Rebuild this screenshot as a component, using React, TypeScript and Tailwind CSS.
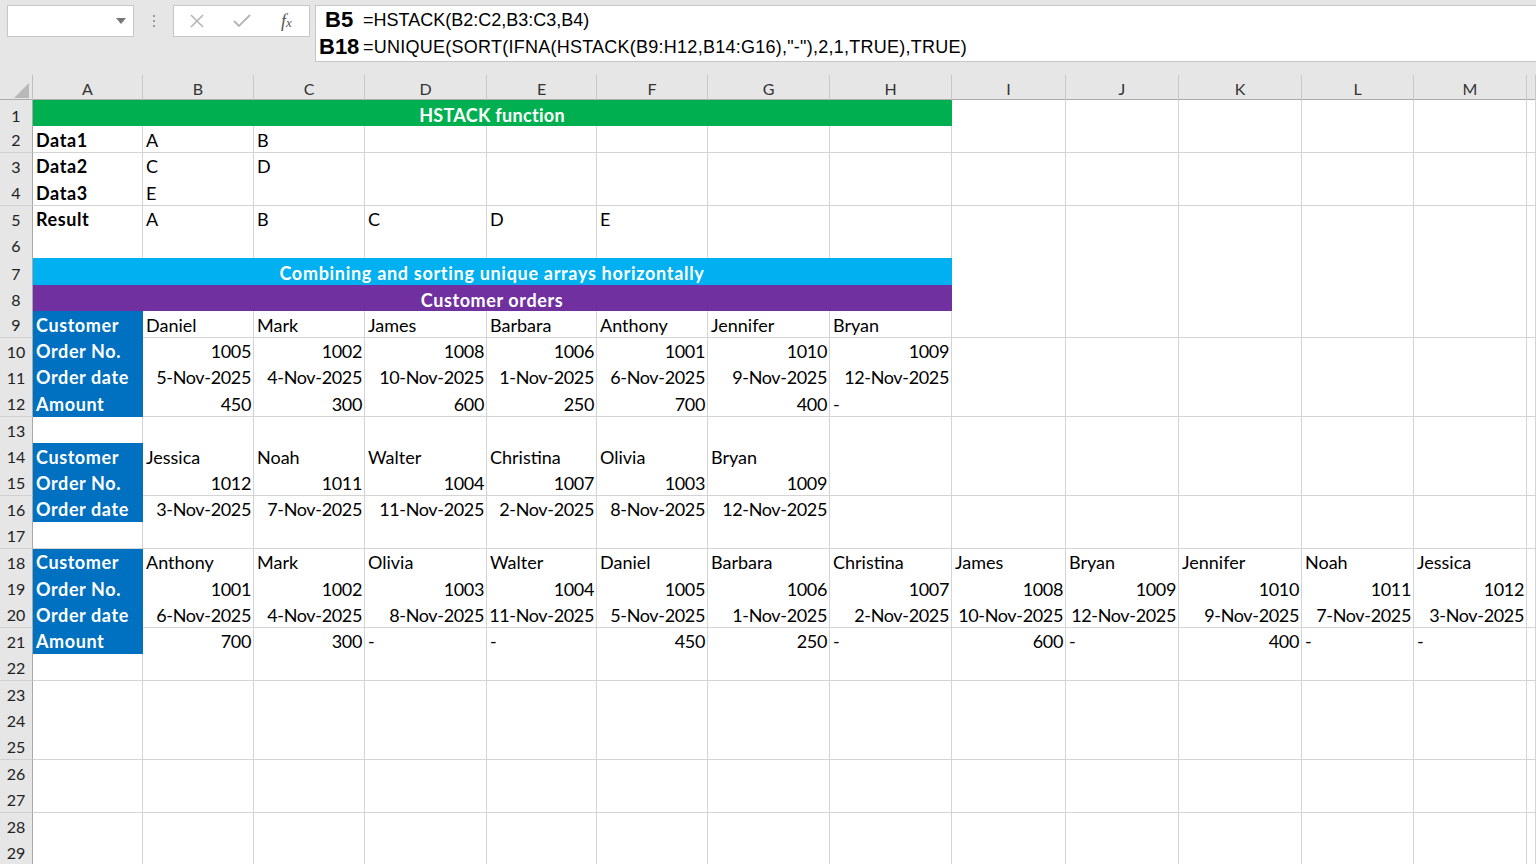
import clsx from 'clsx'

const COLS = ['A', 'B', 'C', 'D', 'E', 'F', 'G', 'H', 'I', 'J', 'K', 'L', 'M', '']
const GRID =
  'grid grid-cols-[33px_110px_111px_111px_122px_110px_111px_122px_122px_114px_113px_123px_112px_113px_1fr]'

const banners: Record<number, { cls: string; text: string }> = {
  1: { cls: 'bg-[#00b050] border-[#00b050] tracking-[0.3px]', text: 'HSTACK function' },
  7: { cls: 'bg-[#00b0f0] border-[#00b0f0] tracking-[0.7px]', text: 'Combining and sorting unique arrays horizontally' },
  8: { cls: 'bg-[#7030a0] border-[#7030a0] tracking-[0.6px]', text: 'Customer orders' },
}

const data: Record<number, string[]> = {
  2: ['Data1', 'A', 'B'],
  3: ['Data2', 'C', 'D'],
  4: ['Data3', 'E'],
  5: ['Result', 'A', 'B', 'C', 'D', 'E'],
  9: ['Customer', 'Daniel', 'Mark', 'James', 'Barbara', 'Anthony', 'Jennifer', 'Bryan'],
  10: ['Order No.', '1005', '1002', '1008', '1006', '1001', '1010', '1009'],
  11: ['Order date', '5-Nov-2025', '4-Nov-2025', '10-Nov-2025', '1-Nov-2025', '6-Nov-2025', '9-Nov-2025', '12-Nov-2025'],
  12: ['Amount', '450', '300', '600', '250', '700', '400', '-'],
  14: ['Customer', 'Jessica', 'Noah', 'Walter', 'Christina', 'Olivia', 'Bryan'],
  15: ['Order No.', '1012', '1011', '1004', '1007', '1003', '1009'],
  16: ['Order date', '3-Nov-2025', '7-Nov-2025', '11-Nov-2025', '2-Nov-2025', '8-Nov-2025', '12-Nov-2025'],
  18: ['Customer', 'Anthony', 'Mark', 'Olivia', 'Walter', 'Daniel', 'Barbara', 'Christina', 'James', 'Bryan', 'Jennifer', 'Noah', 'Jessica'],
  19: ['Order No.', '1001', '1002', '1003', '1004', '1005', '1006', '1007', '1008', '1009', '1010', '1011', '1012'],
  20: ['Order date', '6-Nov-2025', '4-Nov-2025', '8-Nov-2025', '11-Nov-2025', '5-Nov-2025', '1-Nov-2025', '2-Nov-2025', '10-Nov-2025', '12-Nov-2025', '9-Nov-2025', '7-Nov-2025', '3-Nov-2025'],
  21: ['Amount', '700', '300', '-', '-', '450', '250', '-', '600', '-', '400', '-', '-'],
}

const blueRows = [9, 10, 11, 12, 14, 15, 16, 18, 19, 20, 21]
const boldRows = [2, 3, 4, 5]

function Cell({ v, blue, bold }: { v: string; blue?: boolean; bold?: boolean }) {
  const right = /^\d/.test(v)
  return (
    <div
      className={clsx(
        'h-full flex items-center overflow-hidden whitespace-nowrap px-[3px] pt-[2px] border-r border-b',
        blue ? 'bg-[#0070c0] border-[#0070c0] text-white font-bold' : 'bg-white border-[#d4d4d4] text-black',
        (bold || blue) && 'tracking-[0.6px]',
        bold && 'font-bold',
        right ? 'justify-end pr-[2px] tracking-[-0.35px]' : 'justify-start'
      )}
    >
      {v}
    </div>
  )
}

function FormulaBar() {
  return (
    <div className="h-[75px] bg-[#e6e6e6] flex items-start pt-[5px] pl-[7px]">
      <div className="w-[127px] h-[32px] bg-white border border-[#c6c6c6] flex items-center justify-end pr-[7px]">
        <svg width="10" height="6" viewBox="0 0 10 6">
          <path d="M0 0 L10 0 L5 6 Z" fill="#777" />
        </svg>
      </div>
      <div className="w-[39px] h-[32px] flex flex-col items-center justify-center gap-[3px]">
        <span className="w-[2px] h-[2px] bg-[#9a9a9a]" />
        <span className="w-[2px] h-[2px] bg-[#9a9a9a]" />
        <span className="w-[2px] h-[2px] bg-[#9a9a9a]" />
      </div>
      <div className="w-[137px] h-[32px] bg-white border border-[#c6c6c6] flex items-center">
        <svg className="ml-[15px]" width="16" height="16" viewBox="0 0 16 16">
          <path d="M2 2 L14 14 M14 2 L2 14" stroke="#b5b5b5" strokeWidth="1.6" fill="none" />
        </svg>
        <svg className="ml-[28px]" width="18" height="16" viewBox="0 0 18 16">
          <path d="M1 8 L6 13 L17 2" stroke="#b5b5b5" strokeWidth="1.8" fill="none" />
        </svg>
        <span className="ml-[30px] font-['Liberation_Serif',serif] italic text-[18px] text-[#555] leading-none">
          f<span className="text-[13px]">x</span>
        </span>
      </div>
      <div className="ml-[5px] flex-1 h-[57px] bg-white border border-[#c6c6c6] border-r-0 grid grid-cols-[47px_1fr] items-center font-['Liberation_Sans',Arial,sans-serif] text-black">
        <span className="pl-[9px] font-bold text-[22px] leading-[26px]">B5</span>
        <span className="text-[18px] leading-[26px]">=HSTACK(B2:C2,B3:C3,B4)</span>
        <span className="pl-[3px] font-bold text-[22px] leading-[26px]">B18</span>
        <span className="text-[18px] leading-[26px] tracking-[0.25px]">
          =UNIQUE(SORT(IFNA(HSTACK(B9:H12,B14:G16),"-"),2,1,TRUE),TRUE)
        </span>
      </div>
    </div>
  )
}

function App() {
  const rows = Array.from({ length: 29 }, (_, i) => i + 1)
  return (
    <div className="w-[1536px] h-[864px] overflow-hidden bg-white font-['Lato',sans-serif] text-[18px]">
      <FormulaBar />
      <div className={clsx(GRID, 'h-[25px] bg-[#e6e6e6] border-b border-[#ababab]')}>
        <div className="border-r border-[#c0c0c0] flex items-end justify-end pr-[3px] pb-[3px]">
          <svg width="15" height="15" viewBox="0 0 15 15">
            <path d="M15 0 L15 15 L0 15 Z" fill="#b8b8b8" />
          </svg>
        </div>
        {COLS.map((c, i) => (
          <div
            key={i}
            className="border-r border-[#c8c8c8] flex items-center justify-center text-[16px] text-[#333] pt-[2px]"
          >
            {c}
          </div>
        ))}
      </div>
      {rows.map((r) => {
        const banner = banners[r]
        const vals = data[r] || []
        return (
          <div key={r} className={clsx(GRID, 'h-[26.4px]')}>
            <div className="bg-[#e6e6e6] border-r border-r-[#a8a8a8] border-b border-b-[#d0d0d0] flex items-center justify-center text-[16px] text-[#222] pt-[2px]">
              {r}
            </div>
            {banner ? (
              <>
                <div
                  className={clsx(
                    'col-span-8 h-full border-r border-b flex items-center justify-center text-white font-bold pt-[2px]',
                    banner.cls
                  )}
                >
                  {banner.text}
                </div>
                {COLS.slice(8).map((_, i) => (
                  <Cell key={i} v="" />
                ))}
              </>
            ) : (
              COLS.map((_, i) => (
                <Cell
                  key={i}
                  v={vals[i] || ''}
                  blue={i === 0 && blueRows.includes(r)}
                  bold={i === 0 && boldRows.includes(r)}
                />
              ))
            )}
          </div>
        )
      })}
    </div>
  )
}

export default App
